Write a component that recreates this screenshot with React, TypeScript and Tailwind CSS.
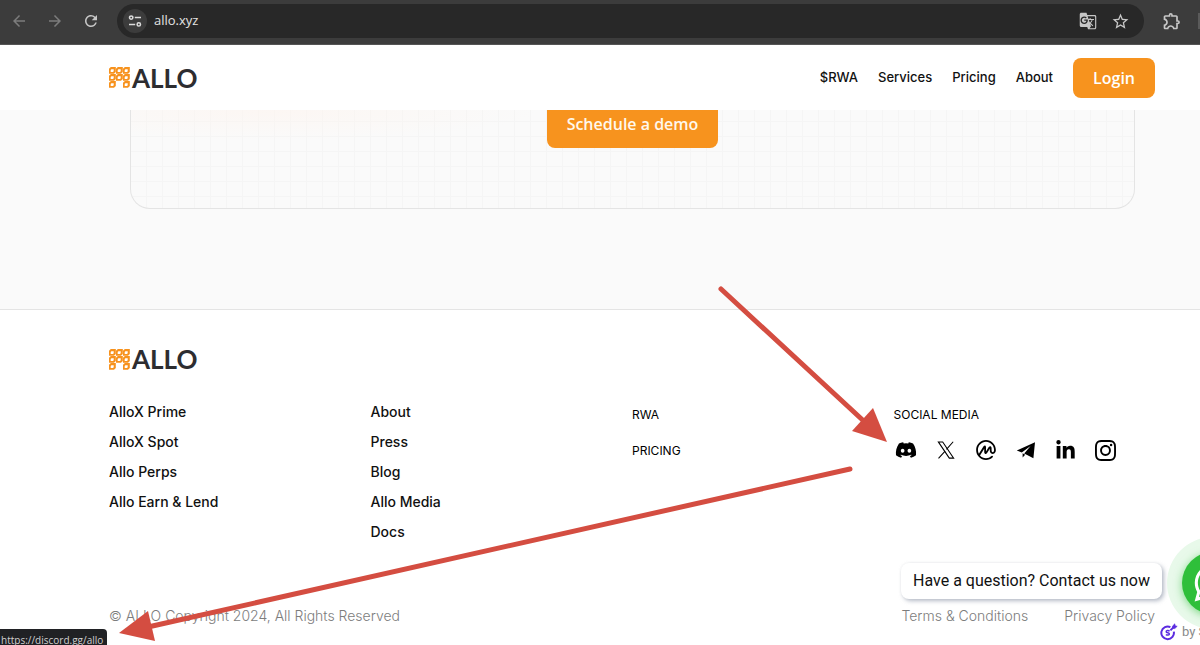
import React from 'react';
import {
  FaDiscord,
  FaLinkedinIn,
  FaWhatsapp,
} from 'react-icons/fa';
import { SiCoinmarketcap, SiInstagram } from 'react-icons/si';
import { MdArrowBack, MdArrowForward, MdGTranslate, MdOutlineExtension, MdRefresh, MdStarBorder } from 'react-icons/md';

const navLinks = ['$RWA', 'Services', 'Pricing', 'About'];
const productLinks = ['AlloX Prime', 'AlloX Spot', 'Allo Perps', 'Allo Earn & Lend'];
const companyLinks = ['About', 'Press', 'Blog', 'Allo Media', 'Docs'];

// Cells of the logo mark, [column, row]
const markCells = [
  [0, 0], [1, 0], [2, 0],
  [0, 1], [1, 1], [2, 1],
  [0, 2], [2, 2],
];

function Logo() {
  return (
    <a href="#" className="flex w-fit items-center gap-0.5">
      <svg width="21" height="21" viewBox="0 0 21 21" aria-hidden="true">
        {markCells.map(([col, row]) => (
          <g key={`${col}-${row}`} transform={`translate(${col * 7} ${row * 7})`}>
            <path d="M1.8 0H6.8v5L5 6.8H0V1.8z" fill="#f7921d" />
            <path d="M2.4 2.2h2.3v2L4 5H1.7V2.9z" fill="#ffffff" />
          </g>
        ))}
      </svg>
      <span className="font-['Lato'] text-[26px] leading-[22px] font-bold text-[#2d2d30]">ALLO</span>
    </a>
  );
}

function XIcon() {
  return (
    <svg width="18" height="18" viewBox="0 0 24 24" fill="none" stroke="#000" strokeWidth="1.4">
      <path d="M1.8 1.2h5.8l14.6 21.6h-5.8z" />
      <path d="M21.6 1l-9 10.1M10.8 13.6L2 23.2" />
    </svg>
  );
}

function TelegramIcon() {
  return (
    <svg width="20" height="20" viewBox="0 0 20 20" fill="#000">
      <path d="M19 2.2L.8 10.4l5 2L14.6 6l-6.4 7.4 9.2 4.8z" />
      <path d="M6.6 13.2v4.2l2.6-2.6z" />
    </svg>
  );
}

const socials = [
  { name: 'Discord', icon: <FaDiscord size={22} /> },
  { name: 'X', icon: <XIcon /> },
  { name: 'CoinMarketCap', icon: <SiCoinmarketcap size={20} /> },
  { name: 'Telegram', icon: <TelegramIcon /> },
  { name: 'LinkedIn', icon: <FaLinkedinIn size={21} /> },
  { name: 'Instagram', icon: <SiInstagram size={21} /> },
];

function BrowserBar() {
  return (
    <div className="flex h-[45px] items-center border-b border-[#555555] bg-[#3c3c3c] pb-0.5 pl-2.5">
      <div className="flex items-center gap-[18px] text-[#7c7c7c]">
        <button aria-label="Back"><MdArrowBack size={18} /></button>
        <button aria-label="Forward"><MdArrowForward size={18} /></button>
        <button aria-label="Reload" className="text-[#c7c7c7]"><MdRefresh size={18} /></button>
      </div>
      <div className="ml-[17px] flex h-[34px] flex-1 items-center rounded-full bg-[#282828] pr-3.5 pl-1.5">
        <button aria-label="Site information" className="flex size-6 items-center justify-center rounded-full bg-[#3c3c3c]">
          <svg width="14" height="14" viewBox="0 0 14 14" fill="none" stroke="#dcdcdc" strokeWidth="1.5">
            <circle cx="3.2" cy="3.6" r="1.7" />
            <path d="M6.8 3.6H13M1 10.4h6.2" />
            <circle cx="10.8" cy="10.4" r="1.7" />
          </svg>
        </button>
        <input
          aria-label="Address"
          defaultValue="allo.xyz"
          className="ml-[7px] min-w-0 flex-1 bg-transparent font-['Open_Sans'] text-[13px] text-[#e3e3e3] outline-none"
        />
        <div className="flex items-center gap-3.5 text-[#c7c7c7]">
          <button aria-label="Translate"><MdGTranslate size={18} /></button>
          <button aria-label="Bookmark"><MdStarBorder size={19} /></button>
        </div>
      </div>
      <button aria-label="Extensions" className="ml-[18px] text-[#c7c7c7]"><MdOutlineExtension size={20} /></button>
      <span className="ml-4 h-4 w-0.5 bg-[#5a5a5a]" />
    </div>
  );
}

function SiteHeader() {
  return (
    <header className="flex h-[65px] items-center justify-between bg-white pr-[45px] pl-[109px]">
      <Logo />
      <nav className="flex items-center gap-5 text-[13px] font-medium text-[#111111]">
        {navLinks.map((label) => (
          <a key={label} href="#">{label}</a>
        ))}
        <button className="h-10 rounded-lg bg-[#f7931e] px-5 font-['Open_Sans'] text-base font-semibold text-white">
          Login
        </button>
      </nav>
    </header>
  );
}

function DemoSection() {
  return (
    <section className="border-b border-[#e4e4e4] bg-[#fafafa] pr-[65px] pb-[100px] pl-[130px]">
      <div className="rounded-b-[20px] border border-t-0 border-[#e4e4e4] bg-[radial-gradient(ellipse_at_14%_0%,#fdf5f0b0,transparent_22%),linear-gradient(#f5f5f5_1px,transparent_1px),linear-gradient(90deg,#f5f5f5_1px,transparent_1px)] bg-[size:100%_100%,16px_15px,16px_15px] bg-[position:0_0,0_11px,15px_0] pb-[60px] text-center">
        <button className="h-[38px] rounded-b-lg bg-[#f7931e] px-5 pb-2.5 align-top font-['Open_Sans'] text-base font-semibold text-[#fff8ec]">
          Schedule a demo
        </button>
      </div>
    </section>
  );
}

function LinkList({ links }: { links: string[] }) {
  return (
    <ul className="space-y-2.5 text-[14px] leading-5 font-medium text-[#111111]">
      {links.map((label) => (
        <li key={label}><a href="#">{label}</a></li>
      ))}
    </ul>
  );
}

function Footer() {
  return (
    <footer className="flex-1 bg-white pt-[38px] pr-[45px] pl-[109px]">
      <Logo />
      <div className="mt-8 grid grid-cols-4">
        <LinkList links={productLinks} />
        <LinkList links={companyLinks} />
        <ul className="space-y-4 pt-[3px] text-[12px] leading-5 text-black">
          <li><a href="#">RWA</a></li>
          <li><a href="#">PRICING</a></li>
        </ul>
        <div className="pt-[3px]">
          <h2 className="text-[12px] leading-5 text-black">SOCIAL MEDIA</h2>
          <div className="mt-[13px] flex gap-4 text-black">
            {socials.map(({ name, icon }) => (
              <a key={name} href="#" aria-label={name} className="flex size-6 items-center justify-center">
                {icon}
              </a>
            ))}
          </div>
        </div>
      </div>
      <div className="mt-16 flex justify-between text-[14px] leading-5 font-light text-[#7d7d7d]">
        <p>© ALLO Copyright 2024, All Rights Reserved</p>
        <div className="flex gap-9">
          <a href="#">Terms &amp; Conditions</a>
          <a href="#">Privacy Policy</a>
        </div>
      </div>
    </footer>
  );
}

function ChatWidget() {
  return (
    <>
      <div className="absolute right-[38px] bottom-[46px] rounded-lg bg-white px-3 py-1.5 font-['Roboto'] text-base text-[#111111] shadow-[2px_2px_4px_#8a94a8a0,0_0_3px_#0000000c]">
        Have a question? Contact us now
      </div>
      <button
        aria-label="WhatsApp"
        className="absolute -right-[59px] bottom-4 flex size-[92px] items-center justify-center rounded-full bg-[#e8f9ea]"
      >
        <span className="flex size-[62px] items-center justify-center rounded-full bg-[#2fbf3a] text-white shadow-[0_2px_8px_#2fbf3a90]">
          <FaWhatsapp size={42} />
        </span>
      </button>
      <a href="#" className="absolute bottom-1 left-[calc(100%-40px)] flex items-center gap-1 font-['Roboto'] text-[13px] leading-[18px] whitespace-nowrap text-[#8a8a8a]">
        <svg width="18" height="18" viewBox="0 0 18 18" fill="none" stroke="#5b2be0" strokeWidth="2">
          <path d="M10.4 4.2A6.3 6.3 0 1 0 13.8 8.6" />
          <path d="M9.6 8.2C8.4 7 6 7.4 6.2 8.8c.2 1.3 3.2.7 3.2 2.2 0 1.3-2.4 1.5-3.4.4" strokeWidth="1.5" />
          <path d="M10.4 7.4L14.4 3.4" />
          <path d="M12.4 3.2L14.8.8l.4 2 2 .5-2.4 2.3-2-.4z" fill="#5b2be0" strokeWidth="0.6" />
        </svg>
        by S
      </a>
    </>
  );
}

function Arrows() {
  return (
    <svg className="pointer-events-none absolute top-0 left-0" width="1200" height="645" fill="#d44d41" stroke="#d44d41">
      <path d="M721 289L868 425" strokeWidth="5" strokeLinecap="round" />
      <path d="M887 442L852 431L873 408z" stroke="none" />
      <path d="M850 469L148 627" strokeWidth="5" strokeLinecap="round" />
      <path d="M119 633L148 611L155 641z" stroke="none" />
    </svg>
  );
}

export default function App() {
  return (
    <div className="relative flex min-h-screen flex-col overflow-hidden bg-white font-['Inter',sans-serif]">
      <BrowserBar />
      <SiteHeader />
      <DemoSection />
      <Footer />
      <ChatWidget />
      <div className="absolute bottom-0 left-0 h-4 rounded-tr bg-[#202124] pr-1 pl-px font-['Open_Sans'] text-[10px] leading-[22px] text-[#d0d0d0]">
        https://discord.gg/allo
      </div>
      <Arrows />
    </div>
  );
}
